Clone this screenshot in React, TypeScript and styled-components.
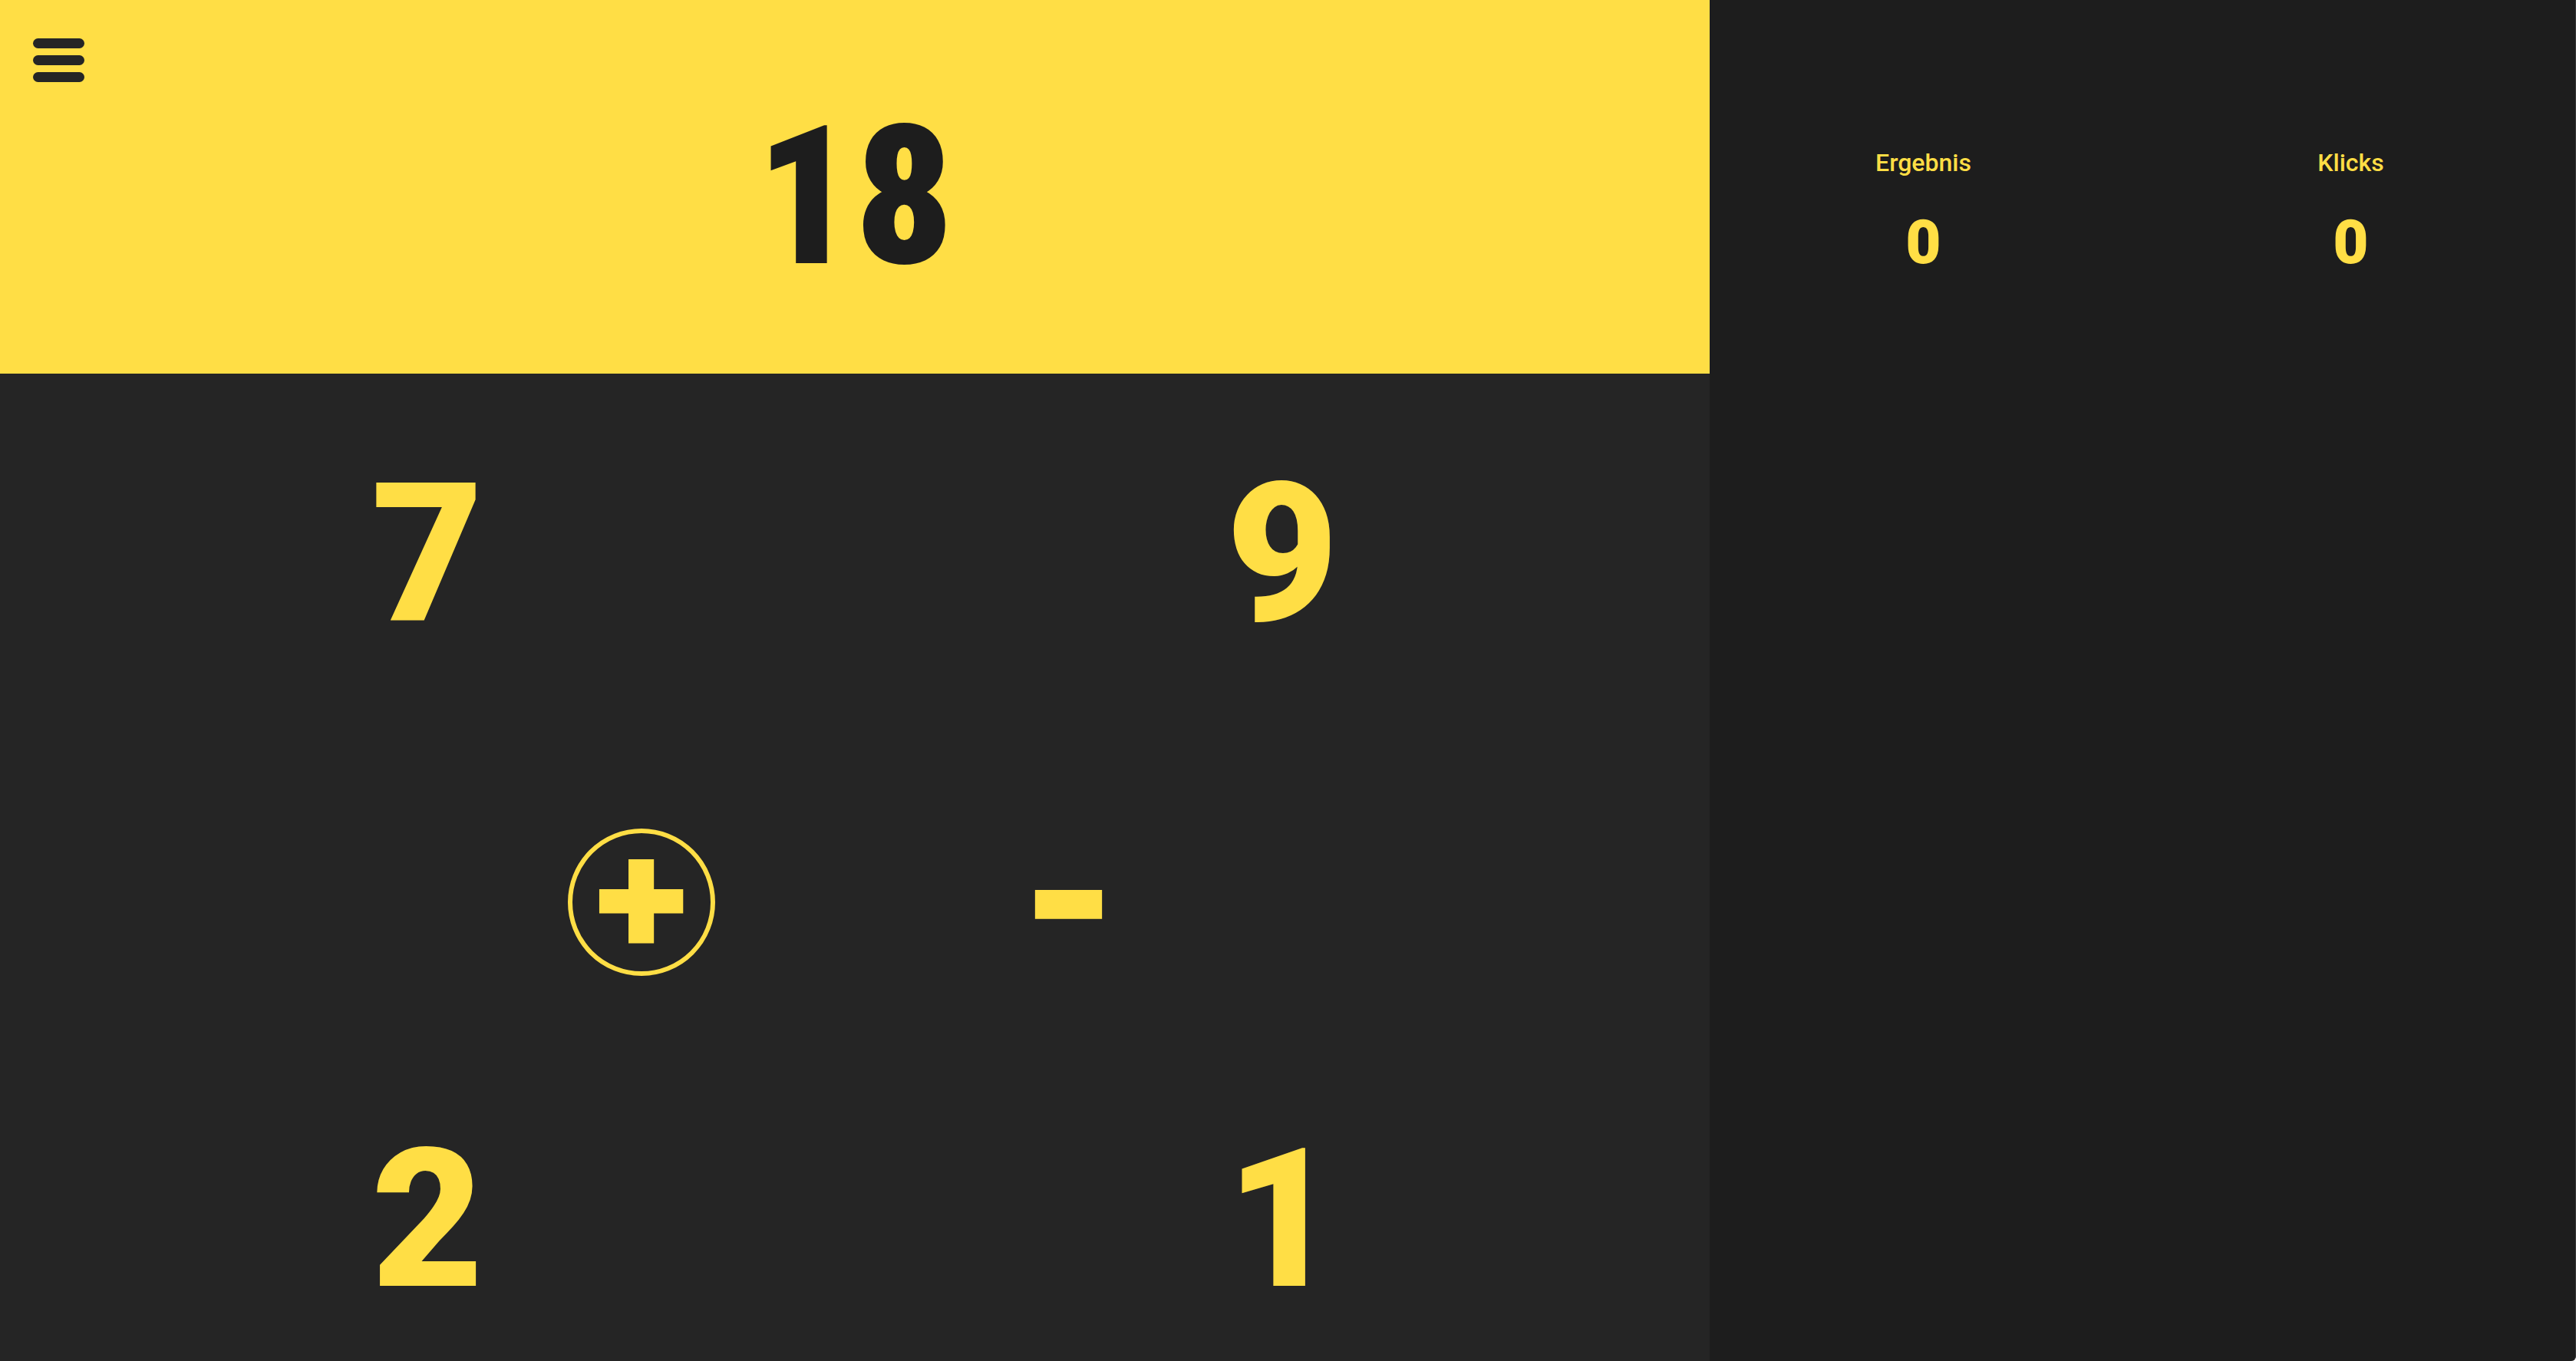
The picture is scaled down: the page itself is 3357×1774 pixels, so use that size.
import React, { useState } from 'react';
import styled, { createGlobalStyle } from 'styled-components';

const yellow = '#ffde45';
const dark = '#252525';
const darker = '#1d1d1d';

const GlobalStyle = createGlobalStyle`
  * { box-sizing: border-box; }
  body { margin: 0; background: #ffffff; }
  button { margin: 0; padding: 0; border: 0; background: none; color: inherit; font: inherit; cursor: pointer; }
`;

const Page = styled.main`
  display: grid;
  grid-template-columns: 2fr 1fr;
  min-height: 100vh;
  padding-right: 14px;
  border-right: 1px solid #3a3a3a;
  border-bottom-right-radius: 6px;
  background: ${darker};
  color: ${yellow};
  font-family: Roboto, 'Liberation Sans', sans-serif;
`;

const Game = styled.section`
  display: grid;
  grid-template-rows: 487fr 1287fr;
`;

const Header = styled.header`
  display: grid;
  grid-template-columns: 1fr auto 1fr;
  align-items: center;
  padding: 0 43px;
  background: ${yellow};
  color: ${darker};
`;

const MenuButton = styled.button`
  display: flex;
  flex-direction: column;
  justify-content: space-between;
  align-self: start;
  width: 67px;
  height: 57px;
  margin-top: 50px;
`;

const MenuBar = styled.span`
  height: 13px;
  border-radius: 7px;
  background: ${dark};
`;

const Target = styled.h1`
  margin: 0;
  padding-top: 26px;
  font-family: 'Roboto Condensed', Roboto, sans-serif;
  font-size: 252px;
  font-weight: 900;
  line-height: 300px;
`;

const Board = styled.div`
  display: grid;
  grid-template-rows: 472fr 434fr 381fr;
  background: ${dark};
`;

const NumberRow = styled.div<{ $top?: number }>`
  display: grid;
  grid-template-columns: 1fr 1fr;
  place-items: center;
  padding-top: ${p => p.$top ?? 0}px;
`;

const OperatorRow = styled.div`
  display: grid;
  grid-template-columns: 1fr 1fr;
  place-items: center;
  padding: 0 25%;
`;

const NumberButton = styled.button`
  font-size: 252px;
  font-weight: 900;
  line-height: 300px;
`;

const OperatorButton = styled.button<{ $size: number; $active: boolean }>`
  display: flex;
  align-items: center;
  justify-content: center;
  width: 192px;
  height: 192px;
  padding-bottom: 32px;
  border: 6px solid ${p => (p.$active ? yellow : 'transparent')};
  border-radius: 50%;
  font-family: Inter, sans-serif;
  font-size: ${p => p.$size}px;
  font-weight: 900;
  line-height: 148px;
`;

const Stats = styled.aside`
  display: grid;
  grid-template-columns: 1fr 1fr;
  align-content: start;
  padding-top: 192px;
`;

const Stat = styled.div`
  display: flex;
  flex-direction: column;
  align-items: center;
  gap: 36px;
`;

const StatLabel = styled.span`
  font-size: 32px;
  font-weight: 500;
  line-height: 40px;
`;

const StatValue = styled.span`
  font-size: 80px;
  font-weight: 900;
  line-height: 96px;
`;

type Operator = '+' | '-';

const operators: { sign: Operator; size: number; name: string }[] = [
  { sign: '+', size: 208, name: 'Plus' },
  { sign: '-', size: 256, name: 'Minus' },
];

const stats = [
  { label: 'Ergebnis', value: 0 },
  { label: 'Klicks', value: 0 },
];

export default function App() {
  const [operator, setOperator] = useState<Operator>('+');

  return (
    <Page>
      <GlobalStyle />
      <Game>
        <Header>
          <MenuButton type="button" aria-label="Menü">
            <MenuBar />
            <MenuBar />
            <MenuBar />
          </MenuButton>
          <Target>18</Target>
        </Header>
        <Board>
          <NumberRow>
            <NumberButton type="button">7</NumberButton>
            <NumberButton type="button">9</NumberButton>
          </NumberRow>
          <OperatorRow>
            {operators.map(({ sign, size, name }) => (
              <OperatorButton
                key={sign}
                type="button"
                aria-label={name}
                aria-pressed={operator === sign}
                $size={size}
                $active={operator === sign}
                onClick={() => setOperator(sign)}
              >
                {sign}
              </OperatorButton>
            ))}
          </OperatorRow>
          <NumberRow $top={12}>
            <NumberButton type="button">2</NumberButton>
            <NumberButton type="button">1</NumberButton>
          </NumberRow>
        </Board>
      </Game>
      <Stats>
        {stats.map(({ label, value }) => (
          <Stat key={label}>
            <StatLabel>{label}</StatLabel>
            <StatValue>{value}</StatValue>
          </Stat>
        ))}
      </Stats>
    </Page>
  );
}
